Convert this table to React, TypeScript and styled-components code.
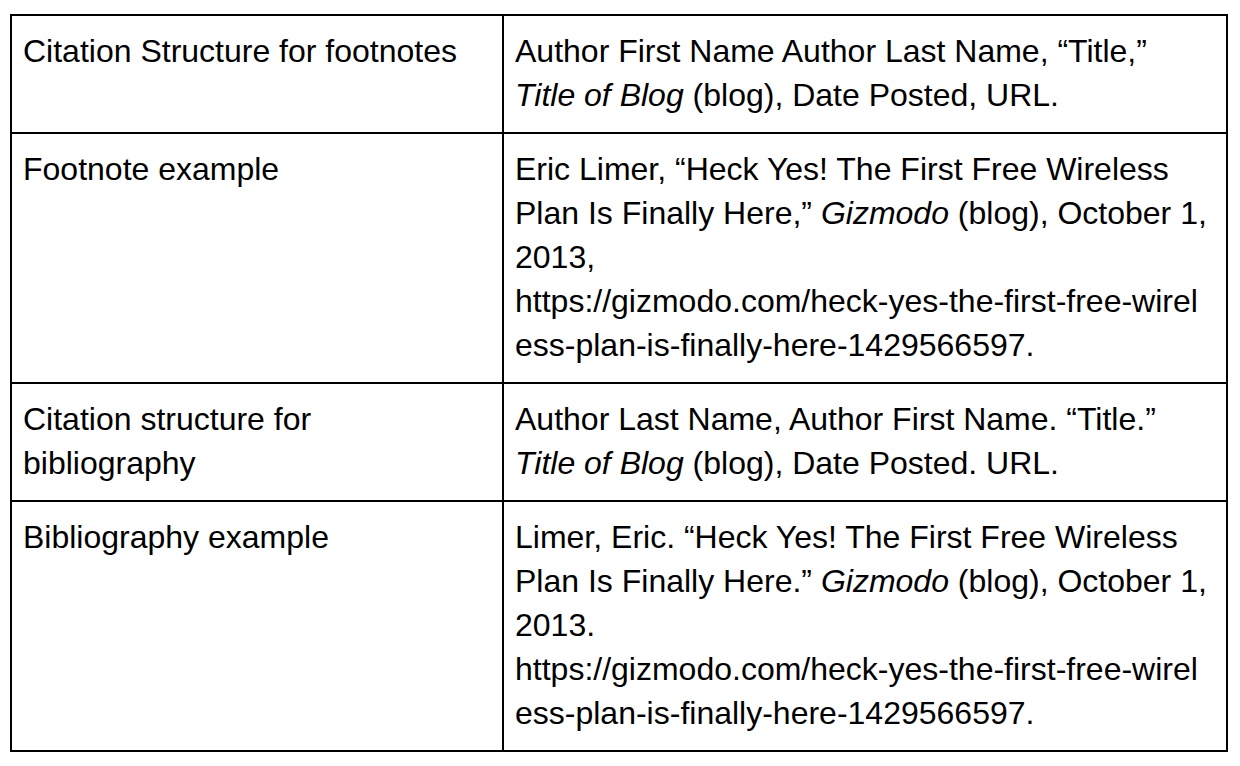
import React from "react";
import styled, { createGlobalStyle } from "styled-components";

const GlobalStyle = createGlobalStyle`
  html, body {
    margin: 0;
    padding: 0;
    background: #ffffff;
  }
  body {
    font-family: "Liberation Sans", Arial, Helvetica, sans-serif;
    color: #000000;
  }
`;

const Page = styled.div`
  padding: 14px 0 0 10px;
`;

const Table = styled.table`
  border-collapse: separate;
  border-spacing: 0;
  border-top: 2px solid #000;
  border-left: 2px solid #000;
  width: 1218px;
  table-layout: fixed;
`;

const LabelCol = styled.col`
  width: 492px;
`;

const ValueCol = styled.col`
  width: 724px;
`;

const Cell = styled.td`
  box-sizing: border-box;
  vertical-align: top;
  border-right: 2px solid #000;
  border-bottom: 2px solid #000;
  padding: 13px 11px 15px 11px;
  font-size: 32px;
  line-height: 44px;
  color: #000;
  white-space: nowrap;
`;

const Em = styled.em`
  font-style: italic;
`;

type Row = { label: React.ReactNode; value: React.ReactNode };

const rows: Row[] = [
  {
    label: "Citation Structure for footnotes",
    value: (
      <>
        Author First Name Author Last Name, “Title,”
        <br />
        <Em>Title of Blog</Em> (blog), Date Posted, URL.
      </>
    ),
  },
  {
    label: "Footnote example",
    value: (
      <>
        Eric Limer, “Heck Yes! The First Free Wireless
        <br />
        Plan Is Finally Here,” <Em>Gizmodo</Em> (blog), October 1,
        <br />
        2013,
        <br />
        https://gizmodo.com/heck-yes-the-first-free-wirel
        <br />
        ess-plan-is-finally-here-1429566597.
      </>
    ),
  },
  {
    label: (
      <>
        Citation structure for
        <br />
        bibliography
      </>
    ),
    value: (
      <>
        Author Last Name, Author First Name. “Title.”
        <br />
        <Em>Title of Blog</Em> (blog), Date Posted. URL.
      </>
    ),
  },
  {
    label: "Bibliography example",
    value: (
      <>
        Limer, Eric. “Heck Yes! The First Free Wireless
        <br />
        Plan Is Finally Here.” <Em>Gizmodo</Em> (blog), October 1,
        <br />
        2013.
        <br />
        https://gizmodo.com/heck-yes-the-first-free-wirel
        <br />
        ess-plan-is-finally-here-1429566597.
      </>
    ),
  },
];

export default function App() {
  return (
    <Page>
      <GlobalStyle />
      <Table>
        <colgroup>
          <LabelCol />
          <ValueCol />
        </colgroup>
        <tbody>
          {rows.map((r, i) => (
            <tr key={i}>
              <Cell>{r.label}</Cell>
              <Cell>{r.value}</Cell>
            </tr>
          ))}
        </tbody>
      </Table>
    </Page>
  );
}
